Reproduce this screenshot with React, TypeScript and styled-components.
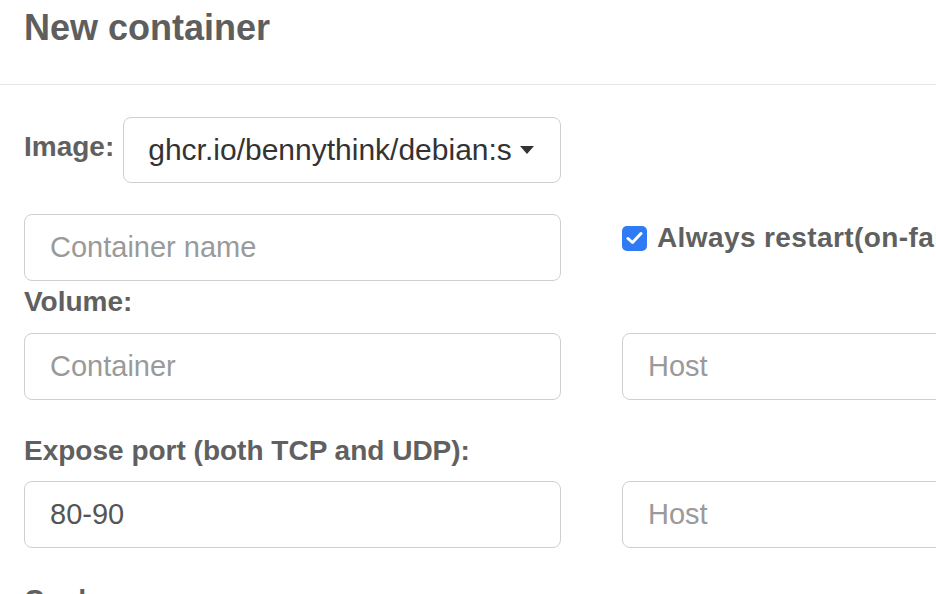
import React from "react";
import styled, { createGlobalStyle } from "styled-components";

const Global = createGlobalStyle`
  html, body { margin: 0; padding: 0; background: #fff; overflow: hidden; }
  body { font-family: "Liberation Sans", Arial, Helvetica, sans-serif; }
  * { box-sizing: border-box; }
`;

const Modal = styled.div`
  width: 1240px;
  background: #fff;
`;

const Header = styled.div`
  padding: 9px 24px 37px;
  border-bottom: 1px solid #e5e5e5;
`;

const Title = styled.h4`
  margin: 0;
  font-size: 36px;
  line-height: 38px;
  font-weight: bold;
  color: #5e5e5e;
`;

const Body = styled.div`
  padding: 32px 24px 0;
  display: flex;
  flex-direction: column;
`;

const ImageRow = styled.div`
  display: flex;
  align-items: center;
  gap: 9px;
`;

const Label = styled.label<{ $top?: number; $bottom?: number }>`
  display: block;
  font-size: 28px;
  line-height: 30px;
  font-weight: bold;
  color: #606060;
  margin-top: ${(p) => p.$top ?? 0}px;
  margin-bottom: ${(p) => p.$bottom ?? 0}px;
`;

const SelectBox = styled.div`
  width: 438px;
  height: 66px;
  border: 1px solid #cfcfcf;
  border-radius: 8px;
  display: flex;
  align-items: center;
  padding: 0 26px 0 24px;
  gap: 8px;
`;

const SelectText = styled.span`
  flex: 1;
  overflow: hidden;
  white-space: nowrap;
  font-size: 30px;
  color: #333;
`;

const Caret = styled.span`
  width: 0;
  height: 0;
  border-left: 7.5px solid transparent;
  border-right: 7.5px solid transparent;
  border-top: 8px solid #333;
`;

const Row = styled.div<{ $top: number }>`
  display: flex;
  gap: 61px;
  margin-top: ${(p) => p.$top}px;
  align-items: flex-start;
`;

const Input = styled.div<{ $placeholder?: boolean }>`
  width: 537px;
  height: 67px;
  border: 1px solid #cfcfcf;
  border-radius: 8px;
  display: flex;
  align-items: center;
  padding: 0 25px;
  font-size: 29px;
  color: ${(p) => (p.$placeholder ? "#9a9a9a" : "#555")};
  flex-shrink: 0;
`;

const CheckWrap = styled.div`
  display: flex;
  align-items: center;
  gap: 10px;
  padding-top: 9px;
  white-space: nowrap;
`;

const CheckBox = styled.span`
  width: 25px;
  height: 25px;
  border-radius: 5px;
  background: #2f7bf5;
  display: flex;
  align-items: center;
  justify-content: center;
`;

const CheckLabel = styled.span`
  font-size: 28px;
  font-weight: bold;
  color: #606060;
  line-height: 30px;
  letter-spacing: 0.4px;
`;

export default function App() {
  return (
    <>
      <Global />
      <Modal>
        <Header>
          <Title>New container</Title>
        </Header>
        <Body>
          <ImageRow>
            <Label $bottom={6}>Image:</Label>
            <SelectBox>
              <SelectText>ghcr.io/bennythink/debian:stable</SelectText>
              <Caret />
            </SelectBox>
          </ImageRow>
          <Row $top={31}>
            <Input $placeholder>Container name</Input>
            <CheckWrap>
              <CheckBox>
                <svg width="17" height="14" viewBox="0 0 17 14">
                  <path d="M2 7.5 L6.5 11.5 L15 2.5" fill="none" stroke="#fff" strokeWidth="3" strokeLinecap="round" strokeLinejoin="round" />
                </svg>
              </CheckBox>
              <CheckLabel>Always restart(on-failure)</CheckLabel>
            </CheckWrap>
          </Row>
          <Label $top={6} $bottom={16}>Volume:</Label>
          <Row $top={0}>
            <Input $placeholder>Container</Input>
            <Input $placeholder>Host</Input>
          </Row>
          <Label $top={36} $bottom={15}>Expose port (both TCP and UDP):</Label>
          <Row $top={0}>
            <Input>80-90</Input>
            <Input $placeholder>Host</Input>
          </Row>
          <Label $top={37}>Cmd:</Label>
        </Body>
      </Modal>
    </>
  );
}
